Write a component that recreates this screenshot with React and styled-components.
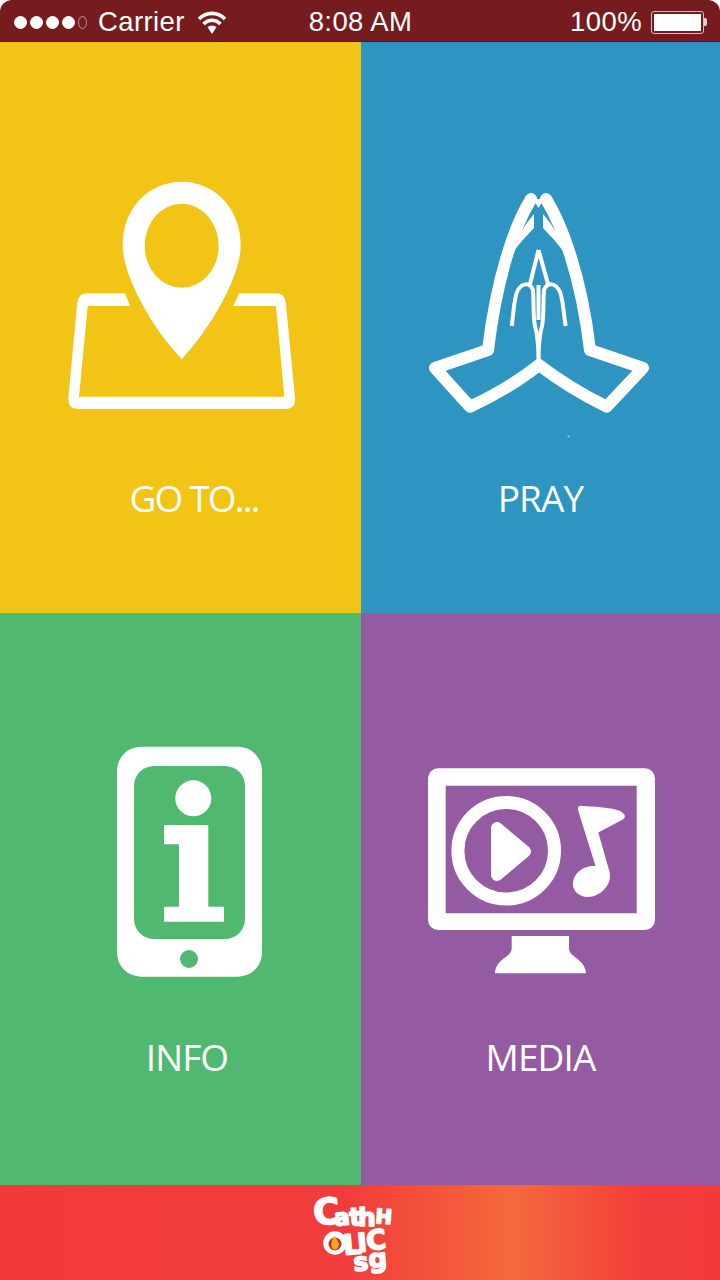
import React from 'react';
import styled, { createGlobalStyle } from 'styled-components';

const GlobalStyle = createGlobalStyle`
  html, body {
    margin: 0;
    padding: 0;
    background: #fff;
  }
`;

const Page = styled.div`
  width: 720px;
  height: 1280px;
  display: flex;
  flex-direction: column;
  overflow: hidden;
  background: #fff;
`;

const StatusBar = styled.div`
  flex: 0 0 42px;
  display: grid;
  grid-template-columns: 1fr auto 1fr;
  align-items: center;
  padding: 3px 13px 0 14px;
  box-sizing: border-box;
  background: #771c1e;
  border-bottom: 1px solid #6a0a14;
  border-radius: 12px 12px 0 0;
  color: #fff;
  font-family: 'Liberation Sans', Arial, sans-serif;
  font-size: 27.5px;
  letter-spacing: 0.4px;
`;

const StatusGroup = styled.div`
  display: flex;
  align-items: center;
  justify-content: ${(props) => (props.$end ? 'flex-end' : 'flex-start')};
`;

const Signal = styled.div`
  display: flex;
  gap: 3px;
  margin-right: 11px;
`;

const Dot = styled.span`
  width: ${(props) => (props.$off ? 9 : 13)}px;
  height: 13px;
  border-radius: 50%;
  box-sizing: border-box;
  background: ${(props) => (props.$off ? 'transparent' : '#fff')};
  border: 1px solid ${(props) => (props.$off ? '#b98a8a' : '#fff')};
`;

const WifiIcon = styled.svg`
  width: 30px;
  height: 24px;
  margin-left: 12px;
`;

const Battery = styled.div`
  display: flex;
  align-items: center;
  margin-left: 9px;
`;

const BatteryShell = styled.div`
  width: 53px;
  height: 23px;
  box-sizing: border-box;
  padding: 2px;
  border: 1px solid #d8b9b9;
  border-radius: 3px;
`;

const BatteryFill = styled.div`
  height: 100%;
  background: #fff;
`;

const BatteryNub = styled.div`
  width: 3px;
  height: 8px;
  background: #e6d2d2;
  border-radius: 0 2px 2px 0;
`;

const Grid = styled.div`
  flex: 1;
  display: grid;
  grid-template-columns: 361px 359px;
  grid-template-rows: 571px 572px;
`;

const Tile = styled.div`
  display: flex;
  flex-direction: column;
  align-items: center;
  background: ${(props) => props.$color};
`;

const Art = styled.svg`
  display: block;
  width: 100%;
  flex: 0 0 ${(props) => props.$height}px;
  height: ${(props) => props.$height}px;
`;

const Label = styled.div`
  margin-left: ${(props) => props.$shift || 0}px;
  color: #fff;
  font-family: 'Open Sans', sans-serif;
  font-size: 37px;
  line-height: 48px;
  letter-spacing: ${(props) => props.$spacing ?? -0.9}px;
`;

const Footer = styled.div`
  flex: 1;
  display: flex;
  justify-content: center;
  background: linear-gradient(90deg, #f23a3b 0%, #f23c3b 48%, #f4693c 71%, #f23c3b 90%, #f23a3b 100%);
`;

const LogoArt = styled.svg`
  display: block;
  width: 100px;
  height: 95px;
  font-family: 'DejaVu Sans', sans-serif;
  font-weight: 700;
  fill: #fff;
  stroke: #fff;
  stroke-width: 1.6px;
  stroke-linejoin: round;
`;

const GoToIcon = () => (
  <Art $height={432} viewBox="0 42 361 432">
    <path
      fill="#fff"
      d="M125 293.3 L87 293.3 Q78.5 293.3 77.3 302 L68.3 398 Q67.5 409 79 409 L285 409 Q296 409 295 398 L285.7 302 Q284.5 293.3 276 293.3 L239.3 293.3 L233.3 306 L276 306 L284.3 396.7 L79 396.7 L87.7 306 L130 306 Z"
    />
    <path
      fill="#fff"
      fillRule="evenodd"
      d="M181.7 181.7 C214 181.7 240.7 208 240.7 245 C240.7 280 205 335 181.7 359 C158 335 122.7 280 122.7 245 C122.7 208 149 181.7 181.7 181.7 Z M181.7 203.7 a37 42 0 1 0 0 84 a37 42 0 1 0 0 -84 Z"
    />
  </Art>
);

const PrayIcon = () => (
  <Art $height={432} viewBox="361 42 359 432">
    <g fill="none" stroke="#fff" strokeLinejoin="round" strokeLinecap="round">
      <path
        strokeWidth="12"
        d="M531 199 C515 225 497 275 488 350 L435 368 L470 406.7 Q510 388 539 365 Q569 388 606.7 406.7 L643 368 L590 350 C581 275 562 225 546 199"
      />
      <path
        strokeWidth="4"
        strokeLinecap="butt"
        d="M511.7 326 C514 310 514 296 518 290 C522 283 530 282 533 290 C534 305 533 318 535 326 C538 336 538.5 345 538.5 362 M565.7 326 C563 310 563 296 559 290 C555 283 547 282 544 290 C543 305 544 318 542 326 C539 336 538.5 345 538.5 362 M538.5 250 L530 284 M538.5 250 L548 284 M538.5 285 L538.5 320"
      />
    </g>
    <path fill="#fff" d="M533 199 L544 199 L538.5 208 Z" />
    <path fill="#fff" d="M534 214 L534 228 Q522 240 513 252 Q518 232 534 214 Z M543 214 L543 228 Q555 240 564 252 Q559 232 543 214 Z" />
    <circle cx="568.5" cy="436.5" r="1" fill="#9fd0e6" />
  </Art>
);

const InfoIcon = () => (
  <Art $height={420} viewBox="0 613 361 420">
    <path
      fill="#fff"
      fillRule="evenodd"
      d="M141 746.7 H238 A24 24 0 0 1 262 770.7 V952.7 A24 24 0 0 1 238 976.7 H141 A24 24 0 0 1 117 952.7 V770.7 A24 24 0 0 1 141 746.7 Z M154 766 A20 20 0 0 0 134 786 V919 A20 20 0 0 0 154 939 H225 A20 20 0 0 0 245 919 V786 A20 20 0 0 0 225 766 Z M189 950 a9 9 0 1 0 0 18 a9 9 0 1 0 0 -18 Z"
    />
    <circle cx="193.3" cy="798.3" r="18" fill="#fff" />
    <path fill="#fff" d="M164 825 H208.3 V906.7 H224 V921.7 H164 V906.7 H179 V844.3 H164 Z" />
  </Art>
);

const MediaIcon = () => (
  <Art $height={420} viewBox="361 613 359 420">
    <path
      fill="#fff"
      fillRule="evenodd"
      d="M438 768.3 H645 A10 10 0 0 1 655 778.3 V920 A10 10 0 0 1 645 930 H438 A10 10 0 0 1 428 920 V778.3 A10 10 0 0 1 438 768.3 Z M445.7 785.7 V913.3 H636.7 V785.7 Z"
    />
    <circle cx="506.2" cy="850.7" r="48.3" fill="none" stroke="#fff" strokeWidth="13" />
    <path fill="#fff" stroke="#fff" strokeWidth="12" strokeLinejoin="round" d="M497 828 L497 875 L525 851.5 Z" />
    <path
      fill="#fff"
      d="M578 810 Q577 805 583 806 C600 807 620 808 624 814 Q627 818 620 821 L598.3 832.5 L609 870 C614 884 600 897 588 897 C578 897 572 890 573 882 C574 872 585 865 595.5 866 Z"
    />
    <path fill="#fff" d="M511.7 936 H569 V948 C569 958 585 958 586 973.3 H495 C496 958 511.7 958 511.7 948 Z" />
  </Art>
);

const Logo = () => (
  <LogoArt viewBox="310 1185 100 95">
    <text x="314" y="1225" fontSize="36" transform="rotate(-4 314 1225)">C</text>
    <text x="335" y="1226" fontSize="23" transform="rotate(-6 335 1226)">a</text>
    <text x="350" y="1226" fontSize="25" transform="rotate(-4 350 1226)">t</text>
    <text x="358" y="1226" fontSize="25">h</text>
    <text x="375" y="1223" fontSize="20" transform="rotate(4 375 1223)">H</text>
    <circle cx="335" cy="1243" r="11" fill="#fff" />
    <circle cx="335" cy="1244" r="6.5" fill="#c9302c" stroke="none" />
    <path d="M334 1236 Q341 1243 338 1248 Q335 1251 332 1248 Q330 1243 334 1236 Z" fill="#f5a623" stroke="none" />
    <text x="344" y="1255" fontSize="28" transform="rotate(-5 344 1255)">L</text>
    <text x="358" y="1252" fontSize="26" transform="rotate(-5 358 1252)">I</text>
    <text x="367" y="1250" fontSize="27" transform="rotate(-5 367 1250)">C</text>
    <text x="354" y="1271" fontSize="25" transform="rotate(-4 354 1271)">s</text>
    <text x="369" y="1268" fontSize="26" transform="rotate(-4 369 1268)">g</text>
  </LogoArt>
);

const App = () => (
  <Page>
    <GlobalStyle />
    <StatusBar>
      <StatusGroup>
        <Signal>
          <Dot />
          <Dot />
          <Dot />
          <Dot />
          <Dot $off />
        </Signal>
        <span>Carrier</span>
        <WifiIcon viewBox="0 0 30 24">
          <g fill="none" stroke="#fff" strokeWidth="3.6" strokeLinecap="butt">
            <path d="M2 9 C9.5 1.5 20.5 1.5 28 9" />
            <path d="M6.5 14 C11.5 9 18.5 9 23.5 14" />
          </g>
          <path d="M10.5 17 Q15 14 19.5 17 L15 24 Z" fill="#fff" />
        </WifiIcon>
      </StatusGroup>
      <span>8:08 AM</span>
      <StatusGroup $end>
        <span>100%</span>
        <Battery>
          <BatteryShell>
            <BatteryFill />
          </BatteryShell>
          <BatteryNub />
        </Battery>
      </StatusGroup>
    </StatusBar>
    <Grid>
      <Tile $color="#f1c416">
        <GoToIcon />
        <Label $shift={27} $spacing={-1.8}>GO TO...</Label>
      </Tile>
      <Tile $color="#2e94c1">
        <PrayIcon />
        <Label>PRAY</Label>
      </Tile>
      <Tile $color="#50b96f">
        <InfoIcon />
        <Label $shift={13}>INFO</Label>
      </Tile>
      <Tile $color="#945ba3">
        <MediaIcon />
        <Label>MEDIA</Label>
      </Tile>
    </Grid>
    <Footer>
      <Logo />
    </Footer>
  </Page>
);

export default App;
